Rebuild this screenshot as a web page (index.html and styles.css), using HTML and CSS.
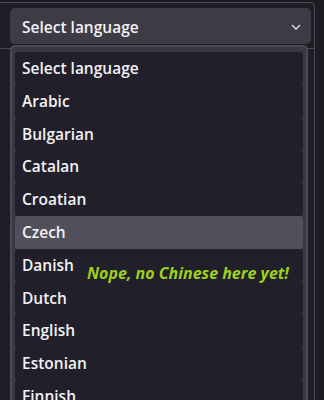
FILE: index.html
```html
<!DOCTYPE html>
<html lang="en">
<head>
    <meta charset="UTF-8">
    <title>Language picker</title>
    <link rel="stylesheet" href="styles.css">
</head>
<body>
    <div class="panel">
        <div class="panel-head">
            <div class="select-bar">
                <span>Select language</span>
                <svg class="chevron" width="10" height="6" viewBox="0 0 10 6">
                    <path d="M1 1 L5 5 L9 1" fill="none" stroke="#d8d7dc" stroke-width="1.5"/>
                </svg>
            </div>
        </div>

        <ul class="dropdown">
            <li>Select language</li>
            <li>Arabic</li>
            <li>Bulgarian</li>
            <li>Catalan</li>
            <li>Croatian</li>
            <li class="hover">Czech</li>
            <li>Danish</li>
            <li>Dutch</li>
            <li>English</li>
            <li>Estonian</li>
            <li>Finnish</li>
        </ul>

        <p class="note">Nope, no Chinese here yet!</p>
    </div>
</body>
</html>
```

FILE: styles.css
```css
body {
    margin: 0;
    background-color: #1c1b22;
    font-family: 'Open Sans', 'Noto Sans', sans-serif;
    color: #f2f2f4;
    overflow: hidden;
}

.panel {
    position: relative;
    width: 314px;
    height: 420px;
    margin-top: 2px;
    background-color: #1f1e26;
    border-top: 1px solid #4a4952;
    border-right: 1px solid #4a4952;
    border-top-right-radius: 5px;
}

.panel-head {
    padding: 5px 3px 4px 10px;
    border-bottom: 1px solid #4a4952;
}

.select-bar {
    display: flex;
    align-items: center;
    justify-content: space-between;
    height: 36px;
    padding: 1px 10px 0 12px;
    box-sizing: border-box;
    background-color: #3d3c45;
    border-radius: 5px;
    font-size: 15.5px;
    font-weight: 600;
}

.chevron {
    margin-top: 1px;
}

.dropdown {
    position: absolute;
    top: 42px;
    left: 10px;
    width: 288px;
    margin: 0;
    padding: 5px 3px 3px;
    list-style: none;
    background-color: #3a3942;
    border: 2px solid #4b4a53;
    border-bottom: none;
    border-radius: 5px 5px 0 0;
}

.dropdown li {
    height: 32.8px;
    line-height: 32.8px;
    padding: 0 7px;
    background-color: #211f2a;
    border-radius: 3px;
    font-size: 15.5px;
    font-weight: 600;
}

.dropdown li.hover {
    background-color: #51505a;
}

.note {
    position: absolute;
    top: 259px;
    left: 87px;
    margin: 0;
    color: #9ccf1f;
    font-size: 16px;
    font-weight: 700;
    font-style: italic;
}
```
